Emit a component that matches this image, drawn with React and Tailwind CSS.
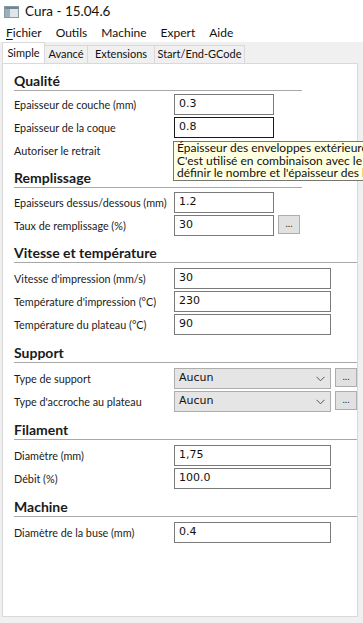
import React from "react";

const font = { fontFamily: 'Lato, "Liberation Sans", sans-serif' };
const valFont = { fontFamily: 'Tahoma, "DejaVu Sans", "Liberation Sans", sans-serif', fontSize: 11 };

function Heading({ children, wide }) {
  return (
    <div className={`flex flex-col ${wide ? "w-[343px]" : "w-[288px]"}`}>
      <div className="h-[18px] text-[14px] font-bold leading-[18px] text-[#1a1a1a]">{children}</div>
      <div className="h-px bg-[#a8a8a8]" />
    </div>
  );
}

function Input({ value, wide, focused }) {
  return (
    <div
      className={`flex h-[21px] items-center border bg-white pl-[4px] text-[#111] ${
        wide ? "w-[157px]" : "w-[100px]"
      } ${focused ? "border-[#1a1a1a]" : "border-[#7a7a7a]"}`}
      style={valFont}
    >
      {value}
    </div>
  );
}

function Dots() {
  return (
    <div className="ml-[4px] flex h-[19px] w-[22px] items-center justify-center border border-[#adadad] bg-[#e1e1e1] pb-[4px] text-[10px] leading-none text-[#333]">
      ...
    </div>
  );
}

function Select({ value }) {
  return (
    <div className="flex h-[21px] w-[157px] items-center justify-between border border-[#adadad] bg-[#e5e5e5] pl-[4px] pr-[5px] text-[#111]" style={valFont}>
      <span>{value}</span>
      <svg width="9" height="6" viewBox="0 0 9 6">
        <path d="M0.5 0.8 L4.5 4.8 L8.5 0.8" fill="none" stroke="#555" strokeWidth="1" />
      </svg>
    </div>
  );
}

function Row({ label, children }) {
  return (
    <div className="flex h-[23px] items-start">
      <div className="w-[160px] whitespace-nowrap pt-[3px] text-[10.8px] leading-[15px] text-[#1a1a1a]">{label}</div>
      <div className="flex items-start">{children}</div>
    </div>
  );
}

export default function App() {
  return (
    <div className="relative h-[623px] w-[363px] overflow-hidden bg-[#f0f0f0]" style={font}>
      {/* Title bar */}
      <div className="flex h-[23px] items-center bg-white pl-[4px]">
        <svg width="15" height="12" viewBox="0 0 15 12" className="mr-[6px]">
          <rect x="0.5" y="0.5" width="14" height="11" fill="#dfe6ea" stroke="#8a9aa3" />
          <rect x="1" y="1" width="13" height="2" fill="#6f8794" />
          <rect x="1" y="3" width="5" height="8" fill="#9cb0ba" />
        </svg>
        <span className="text-[13.5px] text-[#111]">Cura - 15.04.6</span>
      </div>
      {/* Menu bar */}
      <div className="flex h-[19px] items-center gap-[14px] bg-white pl-[6px] text-[12px] text-[#111]">
        <span><span className="underline underline-offset-2">F</span>ichier</span>
        <span>Outils</span>
        <span>Machine</span>
        <span>Expert</span>
        <span>Aide</span>
      </div>
      {/* Tabs */}
      <div className="flex h-[21px] items-end pl-[2px] pt-[2px] text-[11px] text-[#111]">
        <div className="relative z-10 flex h-[21px] w-[43px] justify-center border border-b-0 border-[#d9d9d9] bg-white pt-[2px]">Simple</div>
        <div className="flex h-[18px] w-[43px] items-center justify-center border border-b-0 border-l-0 border-[#d9d9d9] bg-[#f0f0f0]">Avancé</div>
        <div className="flex h-[18px] w-[67px] items-center justify-center border border-b-0 border-l-0 border-[#d9d9d9] bg-[#f0f0f0]">Extensions</div>
        <div className="flex h-[18px] w-[90px] items-center justify-center border border-b-0 border-l-0 border-[#d9d9d9] bg-[#f0f0f0]">Start/End-GCode</div>
      </div>
      {/* Panel */}
      <div className="ml-[2px] h-[554px] w-[356px] border border-[#d9d9d9] bg-white pl-[11px] pt-[8px]">
        <Heading>Qualité</Heading>
        <div className="mt-[3px]">
          <Row label="Epaisseur de couche (mm)"><Input value="0.3" /></Row>
          <Row label="Epaisseur de la coque"><Input value="0.8" focused /></Row>
          <Row label="Autoriser le retrait">
            <div className="mt-[3px] h-[13px] w-[13px] border border-[#333] bg-white" />
          </Row>
        </div>
        <div className="mt-[6px]"><Heading>Remplissage</Heading></div>
        <div className="mt-[4px]">
          <Row label="Epaisseurs dessus/dessous (mm)"><Input value="1.2" /></Row>
          <Row label="Taux de remplissage (%)"><Input value="30" /><Dots /></Row>
        </div>
        <div className="mt-[6px]"><Heading wide>Vitesse et température</Heading></div>
        <div className="mt-[5px]">
          <Row label="Vitesse d'impression (mm/s)"><Input value="30" wide /></Row>
          <Row label="Température d'impression (°C)"><Input value="230" wide /></Row>
          <Row label="Température du plateau (°C)"><Input value="90" wide /></Row>
        </div>
        <div className="mt-[7px]"><Heading wide>Support</Heading></div>
        <div className="mt-[5px]">
          <Row label="Type de support"><Select value="Aucun" /><Dots /></Row>
          <Row label="Type d'accroche au plateau"><Select value="Aucun" /><Dots /></Row>
        </div>
        <div className="mt-[7px]"><Heading wide>Filament</Heading></div>
        <div className="mt-[5px]">
          <Row label="Diamètre (mm)"><Input value="1,75" wide /></Row>
          <Row label="Débit (%)"><Input value="100.0" wide /></Row>
        </div>
        <div className="mt-[7px]"><Heading wide>Machine</Heading></div>
        <div className="mt-[5px]">
          <Row label="Diamètre de la buse (mm)"><Input value="0.4" wide /></Row>
        </div>
      </div>
      {/* Tooltip */}
      <div className="absolute left-[173px] top-[141px] w-[420px] whitespace-nowrap border border-[#767676] bg-[#ffffe1] px-[3px] py-0 text-[12px] leading-[12.5px] text-[#111]">
        <div>Épaisseur des enveloppes extérieures dans la direction horizontale.</div>
        <div>C'est utilisé en combinaison avec le diamètre de la buse pour</div>
        <div>définir le nombre et l'épaisseur des lignes du périmètre.</div>
      </div>
    </div>
  );
}
